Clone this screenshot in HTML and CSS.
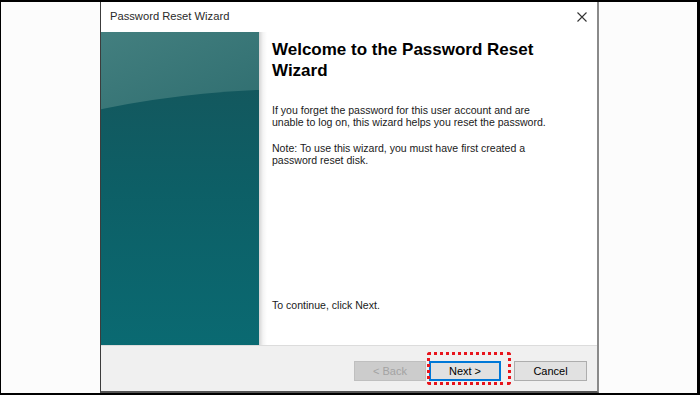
FILE: index.html
```html
<!DOCTYPE html>
<html lang="en">
<head>
    <meta charset="UTF-8">
    <meta name="viewport" content="width=device-width, initial-scale=1.0">
    <title>Password Reset Wizard</title>
    <link rel="stylesheet" href="styles.css">
</head>
<body>
    <div class="frame">
        <div class="dialog">
            <div class="titlebar">
                <span class="title">Password Reset Wizard</span>
                <svg class="close" width="10" height="10" viewBox="0 0 10 10">
                    <path d="M0.5 0.5 L9.5 9.5 M9.5 0.5 L0.5 9.5" stroke="#333" stroke-width="1.1" fill="none"/>
                </svg>
            </div>

            <div class="main">
                <div class="side"></div>
                <div class="content">
                    <h1 class="heading">Welcome to the Password Reset Wizard</h1>
                    <p class="text">If you forget the password for this user account and are<br>unable to log on, this wizard helps you reset the password.</p>
                    <p class="text note">Note: To use this wizard, you must have first created a<br>password reset disk.</p>
                    <p class="text continue">To continue, click Next.</p>
                </div>
            </div>

            <div class="footer">
                <button class="btn" disabled>&lt; Back</button>
                <span class="highlight">
                    <button class="btn btn-default">Next &gt;</button>
                </span>
                <button class="btn btn-cancel">Cancel</button>
            </div>
        </div>
    </div>
</body>
</html>
```

FILE: styles.css
```css
* {
    margin: 0;
    padding: 0;
    box-sizing: border-box;
}

body {
    font-family: 'Liberation Sans', Arial, sans-serif;
    background: #fcfcfc;
}

.frame {
    width: 700px;
    height: 395px;
    border-top: 2px solid #000;
    border-left: 1px solid #000;
    border-right: 3px solid #000;
    border-bottom: 2px solid #000;
    background: #fcfcfc;
    padding-left: 99px;
}

.dialog {
    width: 499px;
    height: 100%;
    background: #fff;
    border-left: 1px solid #3c3c3c;
    border-right: 2px solid #8a8a8a;
    border-bottom: 2px solid #555;
    display: flex;
    flex-direction: column;
}

.titlebar {
    height: 30px;
    display: flex;
    align-items: center;
    justify-content: space-between;
    padding: 0 10px 2px 9px;
}

.title {
    font-size: 11.2px;
    color: #2a2a2a;
}

.close {
    margin-top: 2px;
}

.main {
    flex: 1;
    display: flex;
}

.side {
    width: 158px;
    position: relative;
    overflow: hidden;
    background: linear-gradient(155deg, #437f7f 0%, #2f6e70 40%, #1d6166 100%);
}

/* darker sweep across the lower part of the panel */
.side::before {
    content: '';
    position: absolute;
    left: -800px;
    top: 57px;
    width: 2000px;
    height: 2000px;
    border-radius: 50%;
    background: linear-gradient(180deg, #13585e 0px, #0d5f66 100px, #0a6a72 260px);
}

.content {
    flex: 1;
    display: flex;
    flex-direction: column;
    padding: 7px 10px 0 13px;
    background: linear-gradient(90deg, #d4d4d4 0px, #f4f4f4 4px, #fff 8px);
}

.heading {
    font-size: 17px;
    font-weight: bold;
    line-height: 21px;
    color: #000;
    width: 270px;
}

.text {
    font-size: 10.55px;
    line-height: 12px;
    color: #1a1a1a;
    white-space: nowrap;
}

.heading + .text {
    margin-top: 23px;
}

.note {
    margin-top: 14px;
}

.continue {
    margin-top: auto;
    margin-bottom: 34px;
}

.footer {
    height: 46px;
    background: #f0f0f0;
    border-top: 1px solid #dcdcdc;
    display: flex;
    align-items: flex-start;
    justify-content: flex-end;
    padding: 15px 10px 0 0;
}

.btn {
    width: 72px;
    height: 20px;
    font-family: 'Liberation Sans', Arial, sans-serif;
    font-size: 11px;
    color: #000;
    background: #e1e1e1;
    border: 1px solid #adadad;
}

.btn:disabled {
    color: #a3a3a3;
    background: #cccccc;
    border-color: #bfbfbf;
}

.btn-default {
    border: 2px solid #0078d7;
    display: block;
}

.highlight {
    position: relative;
    margin-left: 3px;
}

/* red dotted annotation ring */
.highlight::after {
    content: '';
    position: absolute;
    left: -2px;
    right: -10px;
    top: -9px;
    bottom: -4px;
    border: 3px dotted #e8141c;
    border-radius: 3px;
}

.btn-cancel {
    margin-left: 13px;
    width: 73px;
}
```
